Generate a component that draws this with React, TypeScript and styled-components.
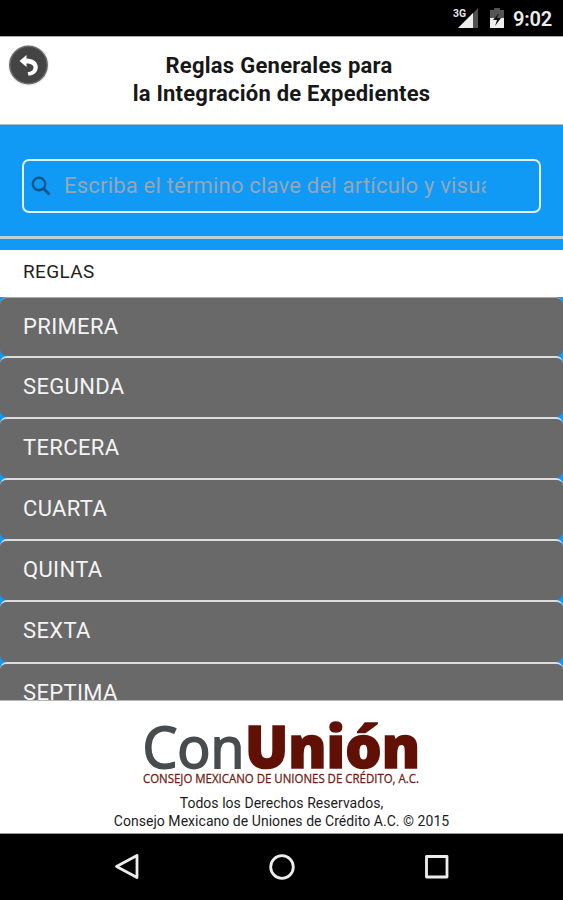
import React from "react";
import styled, { createGlobalStyle } from "styled-components";

const GlobalStyle = createGlobalStyle`
  * { box-sizing: border-box; }
  body { margin: 0; background: #000; font-family: Roboto, "Liberation Sans", sans-serif; }
`;

const Screen = styled.div`
  width: 563px;
  height: 900px;
  display: flex;
  flex-direction: column;
  overflow: hidden;
  background: #119af5;
`;

const StatusBar = styled.header`
  flex: 0 0 36px;
  display: flex;
  justify-content: flex-end;
  align-items: flex-start;
  padding: 6px 11px 0 0;
  background: #000;
  color: #ececec;
`;

const SignalIcon = styled.svg`
  width: 26px;
  height: 24px;
  margin-right: 11px;
`;

const BatteryIcon = styled.svg`
  width: 14px;
  height: 22px;
  margin: 2px 9px 0 0;
`;

const Clock = styled.span`
  width: 39px;
  font-size: 20px;
  line-height: 26px;
  font-weight: 600;
  letter-spacing: -0.2px;
  white-space: nowrap;
`;

const TitleBar = styled.div`
  flex: 0 0 89px;
  display: grid;
  grid-template-columns: 56px 1fr 56px;
  padding-top: 7px;
  background: #fff;
  border-top: 1px solid #a8a8a8;
  border-bottom: 1px solid #a9bfca;
`;

const BackButton = styled.button`
  width: 42px;
  height: 42px;
  margin: 0 0 0 7px;
  padding: 0;
  border: 0;
  background: none;
`;

const Title = styled.h1`
  margin: 8px 0 0;
  font-size: 22px;
  line-height: 28px;
  font-weight: 700;
  text-align: center;
  color: #171717;
  white-space: nowrap;
`;

const TitleLine = styled.span<{ $spacing: number; $inset?: number }>`
  display: block;
  padding-right: ${(p) => p.$inset ?? 0}px;
  letter-spacing: ${(p) => p.$spacing}px;
`;

const SearchPanel = styled.div`
  flex: 0 0 114px;
  padding: 34px 22px 0;
  border-bottom: 3px solid #bcd0dc;
`;

const SearchField = styled.label`
  height: 54px;
  display: flex;
  align-items: center;
  padding-left: 7px;
  border: 2px solid #e0f0fc;
  border-radius: 7px;
`;

const Placeholder = styled.span`
  width: 422px;
  margin-left: 13px;
  overflow: hidden;
  white-space: nowrap;
  font-size: 22px;
  line-height: 30px;
  letter-spacing: 0.2px;
  color: #94a7b6;
`;

const ListHeading = styled.h2`
  flex: 0 0 47px;
  margin: 11px 0 0;
  padding-left: 23px;
  background: #fff;
  font-size: 19px;
  line-height: 44px;
  font-weight: 400;
  letter-spacing: 0.35px;
  color: #222;
`;

const RuleList = styled.ul`
  flex: 1 1 0;
  min-height: 0;
  margin: 0;
  padding: 0;
  overflow: hidden;
  list-style: none;
`;

const RuleRow = styled.li`
  height: 61.2px;
  padding-left: 23px;
  background: #696969;
  border-top: 2px solid #dedcde;
  border-radius: 7px;
  color: #f4f4f4;
  font-size: 22px;
  line-height: 57px;
  letter-spacing: 0.35px;

  &:first-child {
    height: 58.6px;
    border-top: 1px solid #a9a9a9;
    line-height: 57px;
  }
`;

const Footer = styled.footer`
  flex: 0 0 134px;
  display: flex;
  flex-direction: column;
  align-items: center;
  padding-top: 18px;
  background: #fff;
  border-top: 1px solid #b6b6b6;
  border-bottom: 1px solid #999;
`;

const Logo = styled.svg`
  width: 281px;
  height: 75px;
`;

const Copyright = styled.p`
  margin: 0;
  font-size: 14px;
  line-height: 18px;
  letter-spacing: 0.04px;
  text-align: center;
  white-space: nowrap;
  color: #1c1c1c;
`;

const NavBar = styled.nav`
  flex: 0 0 66px;
  display: flex;
  justify-content: center;
  gap: 127px;
  padding-top: 19px;
  background: #000;
`;

const NavIcon = styled.svg`
  width: 28px;
  height: 28px;
  fill: none;
  stroke: #ededed;
  stroke-width: 2.8;
  stroke-linejoin: round;
`;

const rules = ["PRIMERA", "SEGUNDA", "TERCERA", "CUARTA", "QUINTA", "SEXTA", "SEPTIMA"];

export default function App() {
  return (
    <>
      <GlobalStyle />
      <Screen>
        <StatusBar>
          <SignalIcon viewBox="0 0 26 24">
            <path d="M25 2v20H6z" fill="#505050" />
            <path d="M20 7v15H5z" fill="#ededed" />
            <text x="0" y="11" fontSize="11" fontWeight="700" fill="#e5e5e5" textLength="13" lengthAdjust="spacingAndGlyphs">3G</text>
          </SignalIcon>
          <BatteryIcon viewBox="0 0 14 22">
            <path d="M4 0h6v2h4v9H0V2h4z" fill="#555" />
            <path d="M0 10h14v10H0z" fill="#ededed" />
            <path d="M9 5 3 12h4l-2 6 6-8H7z" fill="#111" />
          </BatteryIcon>
          <Clock>9:02</Clock>
        </StatusBar>
        <TitleBar>
          <BackButton aria-label="Regresar">
            <svg width="42" height="42" viewBox="0 0 42 42">
              <circle cx="21.5" cy="21.5" r="20.5" fill="#f0f0f0" />
              <circle cx="21.5" cy="21" r="18.7" fill="#444" stroke="#6b6b6b" strokeWidth="1.5" />
              <path d="M12.5 17 19.5 11v3.4c7 .2 11.3 3.7 11.3 8.5 0 5.2-4 8.5-9.5 8.7 0-1.300-.2-2.300-.8-3.300 3.800-.2 6-2 6-4.700 0-2.600-2.300-4.100-7-4.200V23z" fill="#fff" />
            </svg>
          </BackButton>
          <Title>
            <TitleLine $spacing={0.27} $inset={5}>Reglas Generales para</TitleLine>
            <TitleLine $spacing={0.22}>la Integración de Expedientes</TitleLine>
          </Title>
        </TitleBar>
        <SearchPanel>
          <SearchField>
            <svg width="20" height="20" viewBox="0 0 20 20" fill="none" stroke="#0b568a">
              <circle cx="8" cy="8" r="6.2" strokeWidth="2.4" />
              <path d="m12.5 12.5 6 6" strokeWidth="2.8" />
            </svg>
            <Placeholder>Escriba el término clave del artículo y visualice</Placeholder>
          </SearchField>
        </SearchPanel>
        <ListHeading>REGLAS</ListHeading>
        <RuleList>
          {rules.map((rule) => (
            <RuleRow key={rule}>{rule}</RuleRow>
          ))}
        </RuleList>
        <Footer>
          <Logo viewBox="0 0 281 75" role="img">
            <text x="1.5" y="48.5" fontFamily="Open Sans, Noto Sans, sans-serif" fontSize="57" fill="#484c4e" stroke="#484c4e" strokeWidth="1.8" textLength="102" lengthAdjust="spacingAndGlyphs">Con</text>
            <text x="104" y="48.5" fontFamily="Open Sans, Noto Sans, sans-serif" fontWeight="800" fontSize="58" fill="#611006" stroke="#611006" strokeWidth="1.6" textLength="175" lengthAdjust="spacingAndGlyphs">Unión</text>
            <text x="2" y="64" fontFamily="Open Sans, Noto Sans, sans-serif" fontSize="13" fill="#701c12" stroke="#701c12" strokeWidth=".3" textLength="276" lengthAdjust="spacingAndGlyphs">CONSEJO MEXICANO DE UNIONES DE CRÉDITO, A.C.</text>
          </Logo>
          <Copyright>
            Todos los Derechos Reservados,
            <br />
            Consejo Mexicano de Uniones de Crédito A.C. © 2015
          </Copyright>
        </Footer>
        <NavBar>
          <NavIcon viewBox="0 0 28 28"><path d="M3.5 13.5 24 2.5v22z" /></NavIcon>
          <NavIcon viewBox="0 0 28 28"><circle cx="14" cy="14" r="11.3" /></NavIcon>
          <NavIcon viewBox="0 0 28 28"><rect x="3.5" y="3.5" width="20.5" height="20.5" /></NavIcon>
        </NavBar>
      </Screen>
    </>
  );
}
